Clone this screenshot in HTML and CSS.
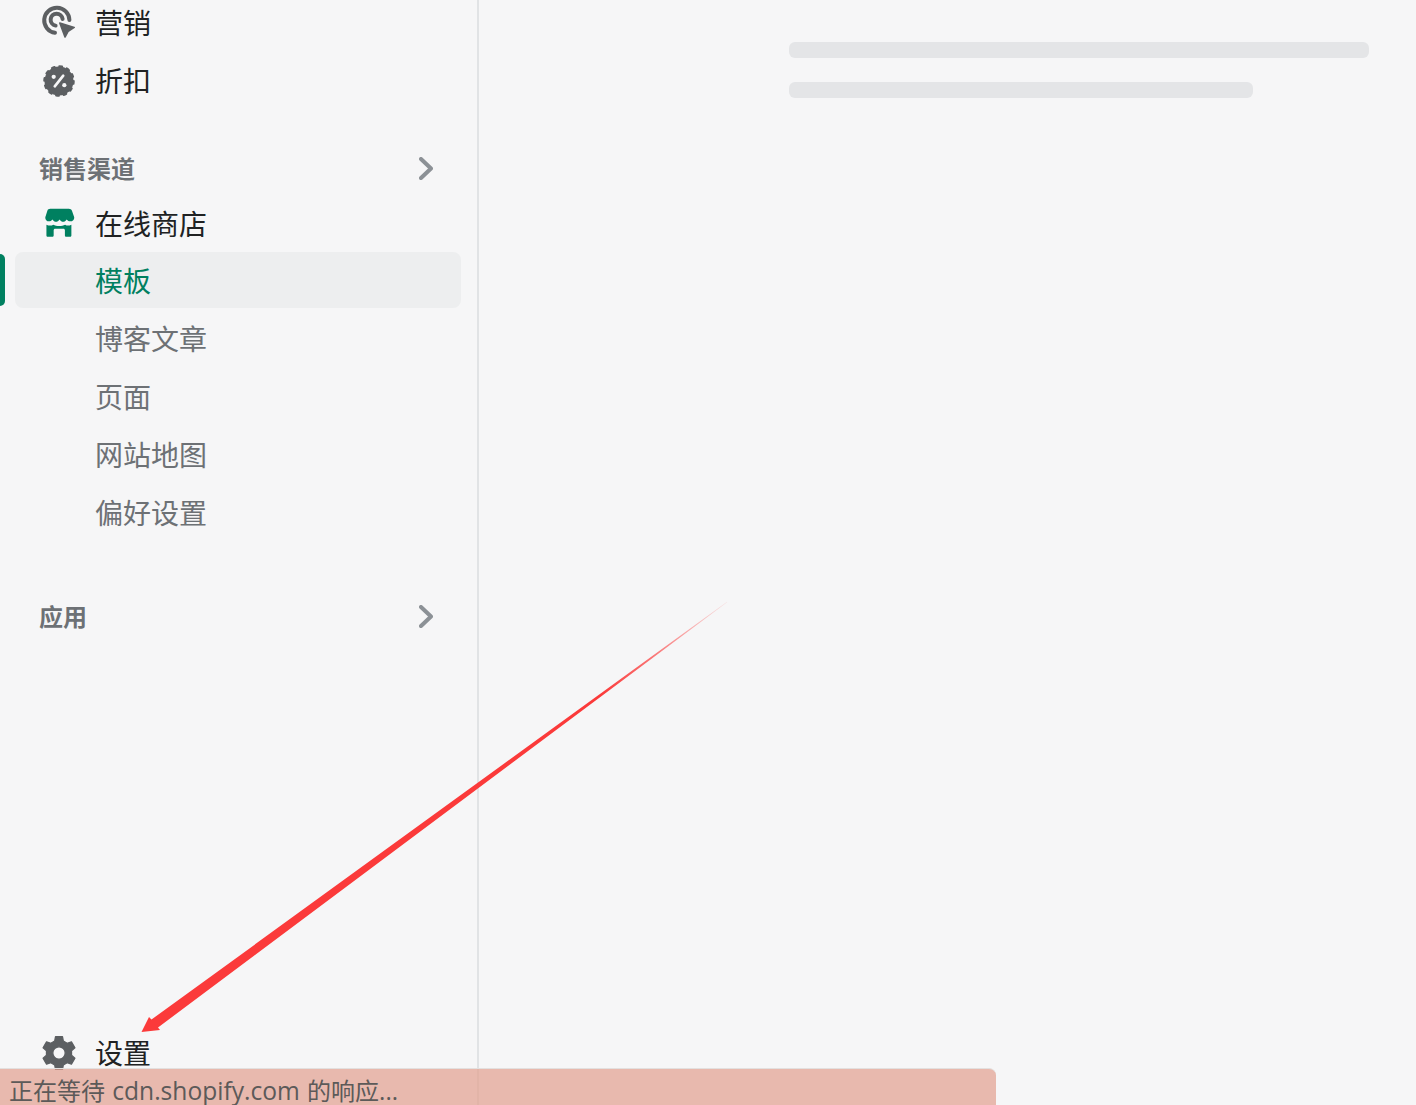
FILE: index.html
```html
<!DOCTYPE html>
<html lang="zh-CN">
<head>
    <meta charset="UTF-8">
    <title>模板</title>
    <link rel="stylesheet" href="styles.css">
</head>
<body>
    <div class="page">
        <nav class="sidebar">
            <a class="nav-item">
                <svg class="nav-icon" viewBox="0 0 20 20">
                    <path class="ring" d="M8 14.9A6.3 6.3 0 1 1 15.2 8.5"/>
                    <path class="ring" d="M8.3 11.3A3 3 0 1 1 11.8 8"/>
                    <path class="cursor" d="M10.4 10L17.6 12.2L14.6 14.1L13 17Z"/>
                </svg>
                营销
            </a>
            <a class="nav-item">
                <svg class="nav-icon" viewBox="-1.3 -1.3 22.6 22.6">
                    <circle cx="10" cy="10" r="8.2"/>
                    <circle class="scallop" cx="10" cy="10" r="8.3"/>
                    <line class="cut" x1="7.6" y1="13" x2="12.4" y2="7"/>
                    <circle class="dot" cx="7" cy="7.6" r="1.2"/>
                    <circle class="dot" cx="13" cy="12.4" r="1.2"/>
                </svg>
                折扣
            </a>

            <div class="section-head">
                <span>销售渠道</span>
                <svg class="chevron" viewBox="0 0 14 23"><path d="M2 2L12 11.500L2 21"/></svg>
            </div>
            <a class="nav-item nav-item-short">
                <svg class="nav-icon nav-icon-green" viewBox="-0.5 -0.5 21 21">
                    <path d="M5.4 2H15.200C15.900 2 16.500 2.400 16.800 3L18 6.400C18.200 8.600 15.400 9.400 14 7.600C13 9.200 11.400 9.200 10.300 7.600C9.200 9.200 7.600 9.200 6.600 7.600C5.200 9.400 2.600 8.600 2.800 6.400L3.900 3C4.100 2.400 4.700 2 5.400 2Z"/>
                    <path d="M3.400 10.400C4.800 11 6 11 7 10.400C8.600 11.300 11.600 11.300 13.200 10.400C14.200 11 15.200 11 16.500 10.400V16C16.500 16.400 16.200 16.700 15.800 16.700H13.800C13.400 16.700 13.100 16.400 13.100 16V13.300C13.100 12.800 12.800 12.500 12.300 12.500H8C7.500 12.500 7.200 12.800 7.200 13.300V16C7.200 16.400 6.900 16.700 6.500 16.700H4.100C3.700 16.700 3.400 16.400 3.400 16Z"/>
                </svg>
                在线商店
            </a>
            <a class="nav-item sub-item active">模板</a>
            <a class="nav-item sub-item">博客文章</a>
            <a class="nav-item sub-item">页面</a>
            <a class="nav-item sub-item">网站地图</a>
            <a class="nav-item sub-item">偏好设置</a>

            <div class="section-head section-head-apps">
                <span>应用</span>
                <svg class="chevron" viewBox="0 0 14 23"><path d="M2 2L12 11.500L2 21"/></svg>
            </div>

            <a class="nav-item nav-item-bottom">
                <svg class="nav-icon" viewBox="-1 -1 22 22">
                    <path class="gear" fill-rule="evenodd" d="M7.610 3.420L8.090 1H11.910L12.390 3.420L14.500 4.640L16.840 3.840L18.750 7.160L16.890 8.780V11.220L18.750 12.840L16.840 16.160L14.500 15.360L12.390 16.580L11.910 19H8.090L7.610 16.580L5.500 15.360L3.160 16.160L1.250 12.840L3.110 11.220V8.780L1.250 7.160L3.160 3.840L5.500 4.640ZM10 6.600A3.400 3.400 0 1 0 10 13.400A3.400 3.400 0 1 0 10 6.600Z"/>
                </svg>
                设置
            </a>
        </nav>

        <main class="content">
            <div class="skeleton-line"></div>
            <div class="skeleton-line skeleton-line-short"></div>
        </main>

        <div class="status-bar">正在等待 <span class="status-url">cdn.shopify.com</span> 的响应...</div>

        <svg class="arrow" viewBox="0 0 1416 1105">
            <defs>
                <linearGradient id="arrowFade" gradientUnits="userSpaceOnUse" x1="727" y1="602" x2="600" y2="695">
                    <stop offset="0" stop-color="#fb3a3a" stop-opacity="0.1"/>
                    <stop offset="0.6" stop-color="#fb3a3a" stop-opacity="0.7"/>
                    <stop offset="1" stop-color="#fb3a3a"/>
                </linearGradient>
            </defs>
            <path fill="url(#arrowFade)" d="M727.200 602.200L158 1027.500L160 1030L141.500 1032L149 1017L151.500 1019.500L727 601.800Z"/>
        </svg>
    </div>
</body>
</html>
```

FILE: styles.css
```css
body {
    margin: 0;
    background-color: #f6f6f7;
    font-family: "Noto Sans CJK SC", "Noto Sans", sans-serif;
    color: #202223;
}
.page {
    position: relative;
    display: flex;
    height: 1105px;
    overflow: hidden;
}

.sidebar {
    display: flex;
    flex-direction: column;
    flex: none;
    box-sizing: border-box;
    width: 479px;
    height: 1111px;
    margin-top: -6px;
    padding-bottom: 23px;
    border-right: 2px solid #e1e3e5;
}
.nav-item {
    display: flex;
    align-items: center;
    gap: 16px;
    box-sizing: border-box;
    height: 58px;
    padding-bottom: 2px;
    padding-left: 39px;
    font-size: 28px;
}
.nav-item-short {
    height: 56px;
}
.nav-item-bottom {
    margin-top: auto;
}
.nav-icon {
    flex: none;
    width: 40px;
    height: 40px;
    margin-top: 2px;
    fill: #5c5f62;
}
.nav-icon-green {
    fill: #008060;
}
.ring {
    fill: none;
    stroke: #5c5f62;
    stroke-width: 2;
    stroke-linecap: round;
}
.cursor {
    stroke: #5c5f62;
    stroke-width: 0.8;
    stroke-linejoin: round;
}
.scallop {
    fill: none;
    stroke: #5c5f62;
    stroke-width: 1.2;
    stroke-linecap: round;
    stroke-dasharray: 1.6 2.74;
}
.cut {
    stroke: #f6f6f7;
    stroke-width: 1.5;
    stroke-linecap: round;
}
.dot {
    fill: #f6f6f7;
}
.gear {
    stroke: #5c5f62;
    stroke-width: 0.7;
    stroke-linejoin: round;
}

.sub-item {
    position: relative;
    padding-left: 95px;
    color: #6d7175;
}
.sub-item.active {
    color: #008060;
}
/* grey pill is 2px shorter than the row */
.sub-item.active::before {
    content: "";
    position: absolute;
    z-index: -1;
    left: 15px;
    top: 0;
    width: 446px;
    height: 56px;
    border-radius: 8px;
    background-color: #edeeef;
}
.sub-item.active::after {
    content: "";
    position: absolute;
    left: 0;
    top: 2px;
    width: 5px;
    height: 52px;
    border-radius: 0 6px 6px 0;
    background-color: #008060;
}

.section-head {
    display: flex;
    align-items: center;
    justify-content: space-between;
    height: 56px;
    margin-top: 30px;
    padding: 0 44px 0 39px;
    font-size: 24px;
    font-weight: 700;
    line-height: 54px;
    color: #6d7175;
}
.section-head-apps {
    margin-top: 46px;
}
.chevron {
    width: 14px;
    height: 23px;
    fill: none;
    stroke: #8c9196;
    stroke-width: 4;
    stroke-linecap: round;
    stroke-linejoin: round;
}

.content {
    flex: 1;
    display: flex;
    flex-direction: column;
    gap: 24px;
    padding: 42px 47px 0 310px;
}
.skeleton-line {
    height: 16px;
    border-radius: 6px;
    background-color: #e4e5e7;
}
.skeleton-line-short {
    width: 464px;
}

.status-bar {
    position: absolute;
    left: 0;
    bottom: 0;
    box-sizing: border-box;
    width: 996px;
    height: 37px;
    padding-left: 9px;
    border-top: 1px solid #e3e0df;
    border-top-right-radius: 7px;
    background-color: rgba(226, 159, 143, 0.7);
    font-family: "Open Sans", "Noto Sans CJK SC", sans-serif;
    font-size: 24px;
    line-height: 44px;
    word-spacing: 1px;
    color: #5c5a59;
    white-space: nowrap;
}
.status-url {
    font-size: 24.6px;
}
.arrow {
    position: absolute;
    left: 0;
    top: 0;
    width: 1416px;
    height: 1105px;
    pointer-events: none;
}
```
